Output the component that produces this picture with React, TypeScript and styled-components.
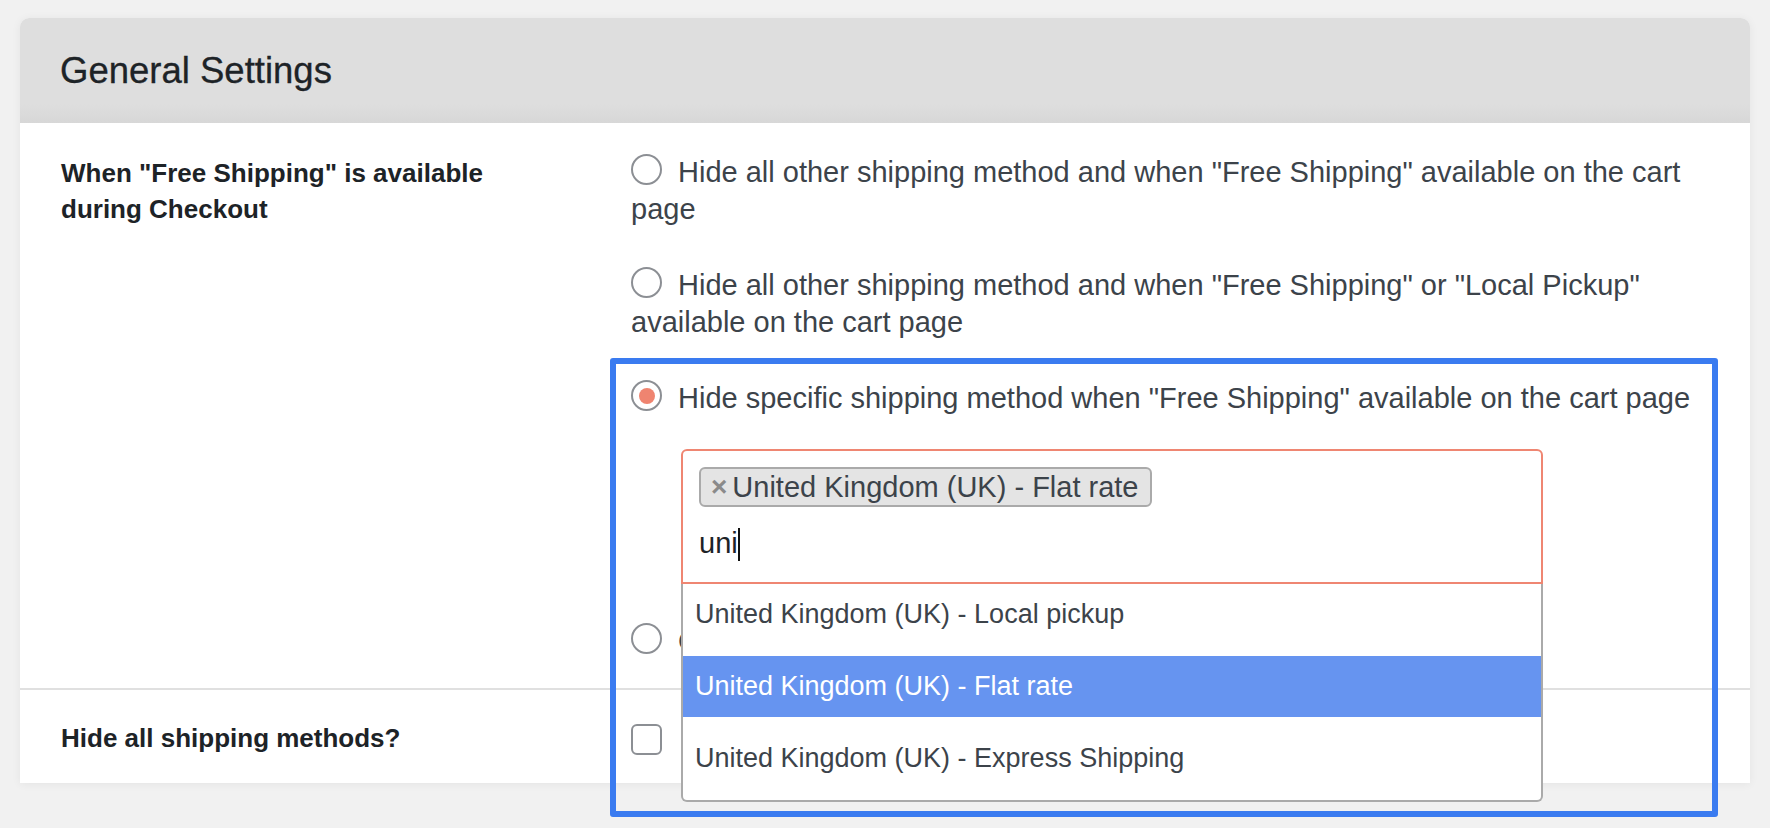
import React from "react";
import styled, { createGlobalStyle } from "styled-components";

const GlobalStyle = createGlobalStyle`
  html, body {
    margin: 0;
    padding: 0;
    background: #f1f1f1;
  }
  body {
    font-family: "Liberation Sans", Arial, sans-serif;
    color: #3c434a;
  }
`;

const Page = styled.div`
  position: relative;
  box-sizing: border-box;
  min-height: 828px;
  padding: 18px 20px 0;
`;

const Card = styled.div`
  background: #fff;
  border-radius: 9px 9px 0 0;
  box-shadow: 0 1px 10px rgba(0, 0, 0, 0.06);
`;

const CardHeader = styled.div`
  height: 105px;
  display: flex;
  align-items: center;
  padding-left: 40px;
  border-radius: 9px 9px 0 0;
  background: linear-gradient(#dedede 0%, #dedede 82%, #d7d7d7 100%);
`;

const Title = styled.h2`
  margin: 0;
  font-size: 36.5px;
  font-weight: 400;
  color: #1d2327;
  -webkit-text-stroke: 0.3px #1d2327;
`;

const FormRow = styled.div<{ $divider?: boolean }>`
  display: grid;
  grid-template-columns: 611px 1fr;
  border-bottom: ${p => (p.$divider ? "2px solid #e0e0e0" : "none")};
`;

const RowLabel = styled.div<{ $top: number; $bottom: number }>`
  padding: ${p => p.$top}px 100px ${p => p.$bottom}px 41px;
  font-size: 26px;
  line-height: 36px;
  font-weight: 700;
  color: #1d2327;
`;

const RowValue = styled.div<{ $top: number; $bottom: number; $center?: boolean }>`
  padding: ${p => p.$top}px 30px ${p => p.$bottom}px 0;
  display: ${p => (p.$center ? "flex" : "block")};
  align-items: center;
`;

const OptionList = styled.ul`
  list-style: none;
  margin: 0;
  padding: 0;
  display: flex;
  flex-direction: column;
  gap: 39px;
`;

const Option = styled.li`
  font-size: 29px;
  line-height: 37px;
  color: #3c434a;
`;

const Radio = styled.span<{ $checked?: boolean }>`
  display: inline-block;
  box-sizing: border-box;
  width: 31px;
  height: 31px;
  margin-right: 16px;
  vertical-align: -3px;
  border: 2px solid #8c8f94;
  border-radius: 50%;
  background: #fff;
  position: relative;

  &::after {
    content: "";
    display: ${p => (p.$checked ? "block" : "none")};
    position: absolute;
    left: 50%;
    top: 50%;
    width: 16px;
    height: 16px;
    margin: -8px 0 0 -8px;
    border-radius: 50%;
    background: #ef8470;
  }
`;

const Checkbox = styled.span`
  display: inline-block;
  box-sizing: border-box;
  width: 31px;
  height: 31px;
  border: 2px solid #8c8f94;
  border-radius: 6px;
  background: #fff;
`;

const MultiSelect = styled.div`
  position: relative;
  margin: 32px 0 0 50px;
  width: 862px;
`;

const Selection = styled.div`
  box-sizing: border-box;
  height: 135px;
  padding: 16px 16px 0;
  border: 2px solid #ef8672;
  border-radius: 6px 6px 0 0;
  background: #fff;
`;

const Tag = styled.span`
  display: inline-flex;
  align-items: center;
  box-sizing: border-box;
  height: 40px;
  padding: 0 11px 0 10px;
  border: 2px solid #aaaaaa;
  border-radius: 6px;
  background: #e4e4e4;
  font-size: 29px;
  line-height: 36px;
  color: #3c434a;
`;

const TagRemove = styled.span`
  font-size: 28px;
  font-weight: 700;
  color: #8a8a8a;
  margin-right: 5px;
`;

const SearchLine = styled.div`
  margin-top: 18px;
  font-size: 29px;
  line-height: 37px;
  color: #1d2327;
`;

const Caret = styled.span`
  display: inline-block;
  width: 2px;
  height: 33px;
  vertical-align: -8px;
  background: #111;
`;

const Results = styled.ul`
  position: absolute;
  top: 100%;
  left: 0;
  right: 0;
  z-index: 5;
  margin: 0;
  padding: 0 0 11px;
  list-style: none;
  background: #fff;
  border: 2px solid #aaaaaa;
  border-top: none;
  border-radius: 0 0 6px 6px;
  display: flex;
  flex-direction: column;
  gap: 11px;
`;

const ResultItem = styled.li<{ $active?: boolean }>`
  height: 61px;
  line-height: 61px;
  padding: 0 12px;
  font-size: 27px;
  white-space: nowrap;
  background: ${p => (p.$active ? "#6694f0" : "transparent")};
  color: ${p => (p.$active ? "#fff" : "#3c434a")};
`;

const Annotation = styled.div`
  position: absolute;
  left: 610px;
  top: 358px;
  width: 1108px;
  height: 459px;
  box-sizing: border-box;
  border: 6px solid #3a7bf0;
  border-radius: 3px;
  z-index: 10;
  pointer-events: none;
`;

const results = [
  "United Kingdom (UK) - Local pickup",
  "United Kingdom (UK) - Flat rate",
  "United Kingdom (UK) - Express Shipping"
];

export default function App() {
  return (
    <>
      <GlobalStyle />
      <Page>
        <Card>
          <CardHeader>
            <Title>General Settings</Title>
          </CardHeader>

          <FormRow $divider>
            <RowLabel $top={32} $bottom={27}>
              When "Free Shipping" is available during Checkout
            </RowLabel>
            <RowValue $top={31} $bottom={28}>
              <OptionList>
                <Option>
                  <Radio />
                  Hide all other shipping method and when "Free Shipping" available on the cart page
                </Option>
                <Option>
                  <Radio />
                  Hide all other shipping method and when "Free Shipping" or "Local Pickup" available on the cart page
                </Option>
                <Option>
                  <Radio $checked />
                  Hide specific shipping method when "Free Shipping" available on the cart page
                  <MultiSelect>
                    <Selection>
                      <Tag>
                        <TagRemove>×</TagRemove>
                        United Kingdom (UK) - Flat rate
                      </Tag>
                      <SearchLine>
                        uni
                        <Caret />
                      </SearchLine>
                    </Selection>
                    <Results>
                      {results.map((r, i) => (
                        <ResultItem key={r} $active={i === 1}>
                          {r}
                        </ResultItem>
                      ))}
                    </Results>
                  </MultiSelect>
                </Option>
                <Option>
                  <Radio />
                  Only show "Free Shipping"
                </Option>
              </OptionList>
            </RowValue>
          </FormRow>

          <FormRow>
            <RowLabel $top={30} $bottom={27}>
              Hide all shipping methods?
            </RowLabel>
            <RowValue $top={6} $bottom={0} $center>
              <Checkbox />
            </RowValue>
          </FormRow>
        </Card>
        <Annotation />
      </Page>
    </>
  );
}
